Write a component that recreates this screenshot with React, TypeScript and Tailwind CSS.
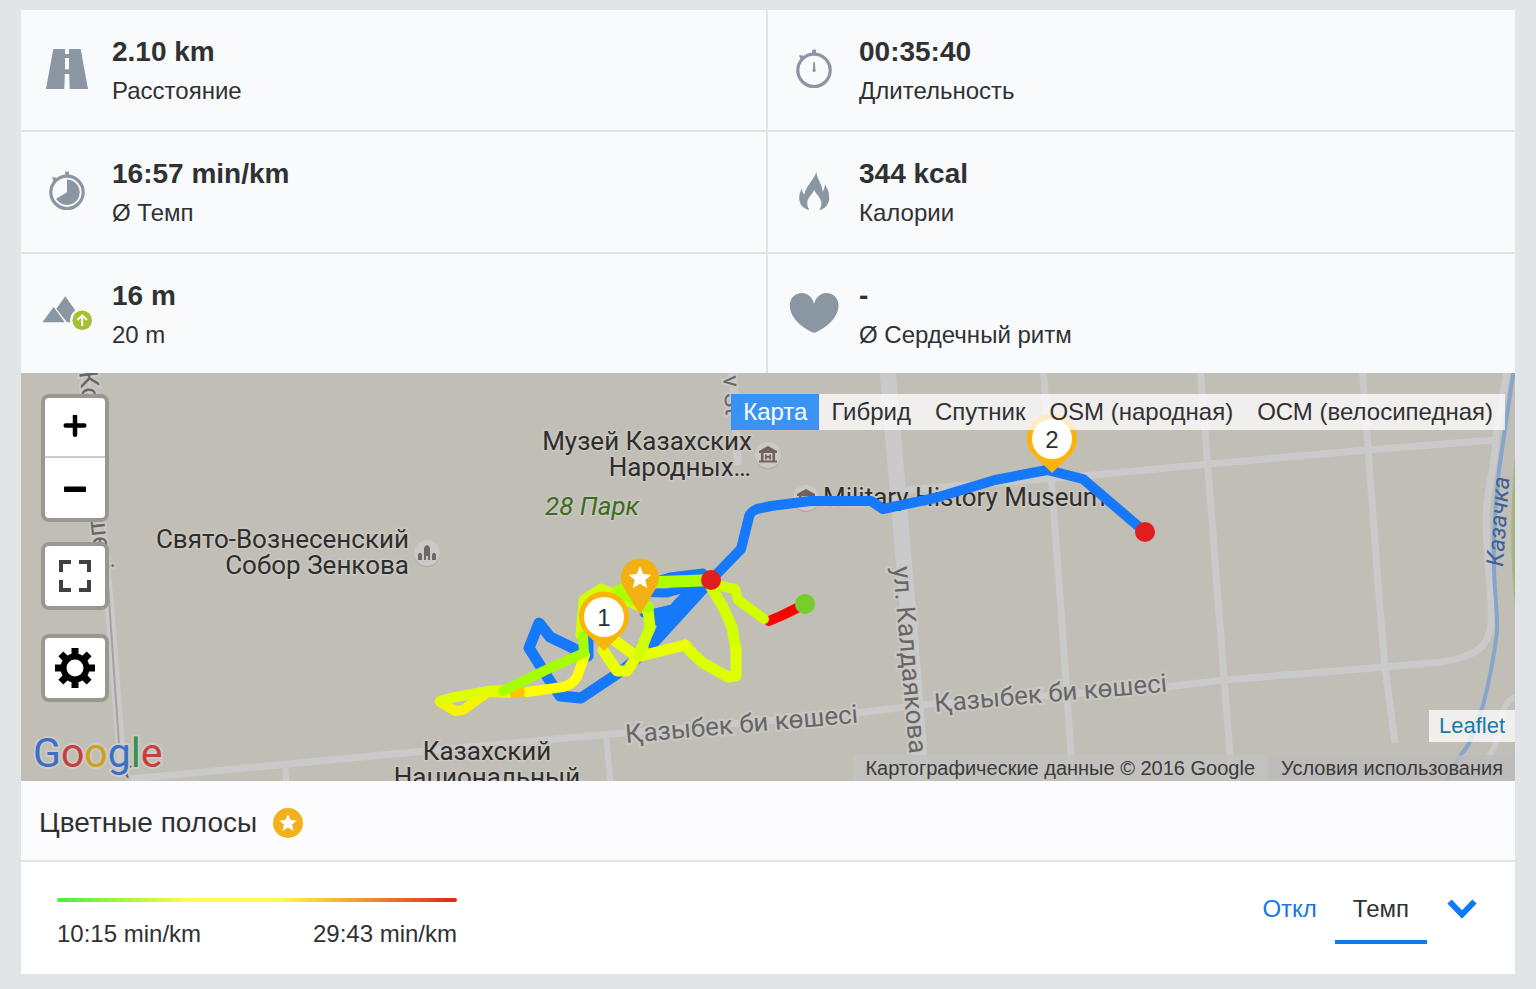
import type { ReactNode } from "react";

const SANS = "font-['Liberation_Sans',Arial,sans-serif]";

function RoadIcon() {
  return (
    <svg width="50" height="50" viewBox="0 0 50 50" aria-hidden="true">
      <path d="M11.3 4H38.7L46 44H4Z" fill="#8a97a3" />
      <path d="M23 4h4v5h-4ZM23 13h4v11.3h-4ZM22.8 29h4.4l.5 15h-5.4Z" fill="#f9fafc" />
    </svg>
  );
}

function WatchIcon({ pace }: { pace?: boolean }) {
  return (
    <svg width="50" height="50" viewBox="0 0 50 50" fill="none" aria-hidden="true">
      <circle cx="25" cy="25.3" r="16.2" stroke="#8a97a3" strokeWidth="3.2" />
      <path d="M23.2 4.6h3.8v4h-3.8Z" fill="#8a97a3" />
      <path d="M11.4 13.6l2.8-2.8" stroke="#8a97a3" strokeWidth="2.4" />
      <path d="M10.6 10.4l3 3" stroke="#8a97a3" strokeWidth="1.8" />
      {pace ? (
        <path d="M25 25.3V12.6A12.7 12.7 0 1 1 14 31.65Z" fill="#8a97a3" />
      ) : (
        <path d="M24.4 17h1.5l.5 7.6a1.6 1.6 0 1 1-2.6 0Z" fill="#8a97a3" />
      )}
    </svg>
  );
}

function FlameIcon() {
  return (
    <svg width="50" height="50" viewBox="0 0 50 50" aria-hidden="true">
      <path
        fill="#8a97a3"
        d="M27.3 5C28 12 33.5 18 33.7 24.7C35.2 22.5 35.8 20 35.8 17.3C38.5 21 40.2 25.5 40.2 30.5C40.2 37 36.5 42 30.3 43C32 40.5 32.7 38 32.3 35C31.5 30 27 27.5 25.2 22.7C23.5 27.5 19 30 18.3 35C18 38 18.8 40.5 20.4 43C14 42 10.2 37 10.2 31C10.2 27.5 11.2 24 13 21.3C12.8 24 13.6 26 15.4 27.6C17 18 25 13.5 27.3 5Z"
      />
    </svg>
  );
}

function MountainIcon() {
  return (
    <svg width="50" height="50" viewBox="0 0 50 50" aria-hidden="true">
      <path d="M.3 33.3L11.7 18L22.7 33.3Z" fill="#8a97a3" />
      <path d="M14.3 19.7L23.3 7.3L36.5 26V33.3H25Z" fill="#8a97a3" />
      <circle cx="40.2" cy="31.3" r="12" fill="#f9fafc" />
      <circle cx="40.2" cy="31.3" r="9.8" fill="#a5c035" />
      <path d="M40.2 37V26.6M35.5 31l4.7-4.7L44.9 31" fill="none" stroke="#fff" strokeWidth="2" />
    </svg>
  );
}

function HeartIcon() {
  return (
    <svg width="50" height="50" viewBox="0 0 50 50" aria-hidden="true">
      <path
        fill="#8a97a3"
        d="M25.1 15C23.5 8 18.5 4 12.8 4C6 4 .8 9 .8 16.5C.8 28 12 38.5 25.1 44C38.3 38.5 49.5 28 49.5 16.5C49.5 9 44.3 4 37.5 4C31.7 4 26.7 8 25.1 15Z"
      />
    </svg>
  );
}

const stats: { value: string; label: string; icon: ReactNode }[] = [
  { value: "2.10 km", label: "Расстояние", icon: <RoadIcon /> },
  { value: "00:35:40", label: "Длительность", icon: <WatchIcon /> },
  { value: "16:57 min/km", label: "Ø Темп", icon: <WatchIcon pace /> },
  { value: "344 kcal", label: "Калории", icon: <FlameIcon /> },
  { value: "16 m", label: "20 m", icon: <MountainIcon /> },
  { value: "-", label: "Ø Сердечный ритм", icon: <HeartIcon /> },
];

const STAR = "M0-10L2.9-3.5L9.9-2.9L4.6 1.8L6.2 8.7L0 5L-6.2 8.7L-4.6 1.8L-9.9-2.9L-2.9-3.5Z";

function NumberPin({ x, y, n }: { x: number; y: number; n: string }) {
  return (
    <g transform={`translate(${x} ${y})`}>
      <path d="M0 34L-20 14.5A25 25 0 1 1 20 14.5Z" fill="#fbb40c" />
      <circle r="20" fill="#fff" />
      <text y="9" textAnchor="middle" fontSize="24" fill="#2e3033" className="font-['Liberation_Sans',sans-serif]">
        {n}
      </text>
    </g>
  );
}

function MuseumPoi({ x, y }: { x: number; y: number }) {
  return (
    <g transform={`translate(${x} ${y})`}>
      <circle cy="1" r="13" fill="#a9a7a3" />
      <circle r="13" fill="#cbc9c7" />
      <path d="M-9-4L0-9L9-4V-2H-9Z" fill="#735f5b" />
      <path d="M-7-2h2.5v8H-7ZM4.5-2H7v8H4.5ZM-9 5.5H9V7.5H-9ZM-3-.5h1.8V1h2.4V-.5H3v5H1.2V2.7h-2.4V4.5H-3Z" fill="#735f5b" />
    </g>
  );
}

function MapCanvas() {
  return (
    <svg
      className="block h-full w-full font-[Roboto,sans-serif]"
      viewBox="21 373 1494 408"
      preserveAspectRatio="xMidYMid slice"
      fill="none"
    >
      <rect x="21" y="373" width="1494" height="408" fill="#c1beb6" />

      <g stroke="#cbcacb" strokeWidth="7">
        <path d="M887 365L908 610L922 790" strokeWidth="16" />
        <path d="M1043 365L1061 610L1073 781" />
        <path d="M1200 365L1218 600L1232 781" />
        <path d="M1362 365L1380 610L1385 667L1395 743" />
        <path d="M732 365L738 465" strokeWidth="8" />
        <path d="M905 490L1094 475L1208 464L1368 450L1494 440" />
        <path d="M130 779L425 751L600 735L857 713L930 704L1165 687L1225 680L1385 667L1440 662C1475 657 1491 648 1491 618C1492 590 1486 560 1486 520C1486 490 1496 465 1496 435L1508 365" />
        <path d="M606 735L611 790" strokeWidth="6" />
        <path d="M285 768L287 790" strokeWidth="6" />
        <path d="M84 365L109 600L122 765" strokeWidth="9" />
        <path d="M1517 697C1505 699 1502 712 1500 728C1497 745 1492 752 1486 760" strokeWidth="6" />
      </g>
      <path d="M84 365L107 570L119 745" stroke="#a3a29f" strokeWidth="2" />
      <path d="M1514 368L1499 470C1495 510 1493 540 1494 570C1495 600 1498 615 1497 632C1491 680 1478 735 1463 752C1455 763 1450 772 1446 785" stroke="#86a5cc" strokeWidth="4" />
      <path d="M1515 455C1510 510 1510 560 1515 605Z" fill="#a3b483" />

      <g fontSize="26" fill="#676665" stroke="#c9c8c5" strokeWidth="4" style={{ paintOrder: "stroke" }}>
        <text transform="translate(626 743) rotate(-5)">Қазыбек би көшесі</text>
        <text transform="translate(935 712) rotate(-5)">Қазыбек би көшесі</text>
        <text transform="translate(893 567) rotate(85)">ул. Калдаякова</text>
        <text transform="translate(79 372) rotate(83)">Ко</text>
        <text transform="translate(90 516) rotate(84)">шесі</text>
        <text fontSize="24" transform="translate(723 376) rotate(86)">v St</text>
        <text fontSize="24" transform="translate(117 774) rotate(20)">к</text>
      </g>
      <text fontSize="24" fontStyle="italic" fill="#3d619a" transform="translate(1503 567) rotate(-86)">
        Казачка
      </text>

      <MuseumPoi x={768} y={455} />
      <MuseumPoi x={806} y={498} />
      <g transform="translate(427 553)">
        <circle cy="1" r="13" fill="#a9a7a3" />
        <circle r="13" fill="#cbc9c7" />
        <path d="M-9 7V1.5Q-7-2-5 1.5V7ZM-3 7V-5Q0-11 3-5V7H1V3H-1V7ZM5 7V1.5Q7-2 9 1.5V7Z" fill="#6b6965" />
      </g>

      <g fontSize="26" fill="#2f2e2c" stroke="#c9c7c2" strokeWidth="3" style={{ paintOrder: "stroke" }}>
        <text x="752" y="450" textAnchor="end">Музей Казахских</text>
        <text x="751" y="476" textAnchor="end">Народных…</text>
        <text x="409" y="548" textAnchor="end">Свято-Вознесенский</text>
        <text x="409" y="574" textAnchor="end">Собор Зенкова</text>
        <text x="487" y="760" textAnchor="middle">Казахский</text>
        <text x="487" y="786" textAnchor="middle">Национальный</text>
        <text x="823" y="506">Military History Museum</text>
        <text x="545" y="515" fill="#3f6b1e" fontStyle="italic">28 Парк</text>
      </g>

      <text x="33" y="767" fontSize="41" fontWeight="400" stroke="#cbc9c6" strokeWidth="4" style={{ paintOrder: "stroke" }}>
        <tspan fill="#3e6fc4">G</tspan>
        <tspan fill="#c8403a">o</tspan>
        <tspan fill="#cfa01c">o</tspan>
        <tspan fill="#3e6fc4">g</tspan>
        <tspan fill="#35924b">l</tspan>
        <tspan fill="#c8403a">e</tspan>
      </text>

      <g strokeWidth="11" strokeLinecap="round" strokeLinejoin="round">
        <path
          stroke="#1678fa"
          strokeWidth="10"
          d="M1145 532L1083 479L1047 470L995 480L935 498L883 509L871 501H810L771 506L757 509Q750 512 749 517L741 549L711 580"
        />
        <path
          stroke="#1678fa"
          d="M711 580L647 650L623 670L581 698L560 696L548 678L529 648L539 623L550 637L573 648L588 656V640"
        />
        <path stroke="#1678fa" strokeWidth="9" d="M703 573L670 577L620 592L667 593L700 584" />
        <path d="M676 602L688 590L700 590L650 648L660 625L642 614L672 607Z" fill="#1678fa" stroke="#1678fa" strokeWidth="5" />
        <path stroke="#ff0000" strokeWidth="10" d="M805 604L783 615L769 621" />
        <path stroke="#d2ff00" strokeWidth="10" d="M764 619L738 600L735 589L711 584" />
        <path stroke="#d2ff00" d="M711 587L723 607L732 627L736 650" />
        <path stroke="#ddff00" d="M736 650L736 676L728 677L703 663L693 654L685 645" />
        <path stroke="#e9ff00" d="M685 645L637 657L610 637M603 650L617 671H627L643 647" />
        <path stroke="#d2ff00" d="M639 655L650 627L648 610L620 597L601 589L584 600L581 635" />
        <path stroke="#adff00" d="M648 607L618 591M711 580L690 581L658 582L620 590" strokeWidth="12" />
        <path stroke="#ffff00" strokeWidth="10" d="M585 655L577 677Q572 685 563 687L527 692" />
        <path stroke="#f5f500" strokeWidth="10" d="M508 693L488 692L463 710L455 711L440 702" />
        <path stroke="#dfff00" strokeWidth="10" d="M440 701L450 698L488 691L505 690" />
        <path stroke="#ffc400" strokeWidth="10" d="M515 693L520 692" />
        <path stroke="#a5ff00" strokeWidth="10" d="M583 636L584 653L550 668L503 691" />
      </g>
      <circle cx="711" cy="580" r="10" fill="#e21d1d" />
      <circle cx="1145" cy="532" r="10" fill="#e21d1d" />
      <circle cx="805" cy="604" r="10" fill="#77cd2b" />
      <path d="M640 615L623.5 587A19 19 0 1 1 656.5 587Z" fill="#f3b012" />
      <path d={STAR} fill="#fff" transform="translate(640 578) scale(1.15)" />
      <NumberPin x={604} y={617} n="1" />
      <NumberPin x={1052} y={439} n="2" />
    </svg>
  );
}

const layers = ["Карта", "Гибрид", "Спутник", "OSM (народная)", "ОСМ (велосипедная)"];
const gearTeeth = [0, 45, 90, 135, 180, 225, 270, 315];

function MapControls() {
  return (
    <div className="absolute top-[21px] left-5 flex flex-col">
      <div className="flex w-[68px] flex-col overflow-hidden rounded-lg border-4 border-[#999890] bg-white">
        <button type="button" aria-label="+" className="flex h-[60px] items-center justify-center border-b-2 border-[#cccccc]">
          <svg width="24" height="24" viewBox="0 0 24 24" stroke="#000" strokeWidth="4.5" strokeLinecap="round">
            <path d="M12 1.2V19.8M2.700 10.5H21.300" />
          </svg>
        </button>
        <button type="button" aria-label="−" className="flex h-[60px] items-center justify-center">
          <svg width="24" height="24" viewBox="0 0 24 24">
            <rect x="1" y="10.5" width="22" height="5.5" rx="1" />
          </svg>
        </button>
      </div>
      <button type="button" aria-label="Fullscreen" className="mt-5 flex size-[68px] items-center justify-center rounded-lg border-4 border-[#999890] bg-white">
        <svg width="32" height="32" viewBox="0 0 32 32" fill="none" stroke="#404040" strokeWidth="4">
          <path d="M2 12V2H12M20 2H30V12M30 20V30H20M12 30H2V20" />
        </svg>
      </button>
      <button type="button" aria-label="Settings" className="mt-6 flex size-[68px] items-center justify-center rounded-lg border-4 border-[#999890] bg-white">
        <svg width="40" height="40" viewBox="-20 -20 40 40">
          {gearTeeth.map((angle) => (
            <path key={angle} transform={`rotate(${angle})`} d="M-3.5-20H3.5V-12H-3.5Z" />
          ))}
          <circle r="11.5" fill="none" stroke="#000" strokeWidth="6" />
        </svg>
      </button>
    </div>
  );
}

export default function App() {
  return (
    <div className={`bg-[#e1e5e8] px-[21px] pt-[10px] pb-[15px] text-2xl text-[#303133] ${SANS}`}>
      <main>
        <dl className="grid grid-cols-2">
          {stats.map((s) => (
            <div
              key={s.label}
              className="flex h-[122px] items-center border-b-2 border-[#e1e4e6] bg-[#f9fafc] odd:border-r-2 nth-last-[-n+2]:h-[119px] nth-last-[-n+2]:border-b-0"
            >
              <div className="flex w-[91px] shrink-0 justify-center">{s.icon}</div>
              <div className="flex flex-col-reverse pt-[2px]">
                <dt className="leading-[38px]">{s.label}</dt>
                <dd className="text-[28px] leading-10 font-bold">{s.value}</dd>
              </div>
            </div>
          ))}
        </dl>

        <section className="relative h-[408px] overflow-hidden">
          <MapCanvas />
          <MapControls />
          <div className="absolute top-[21px] right-[10px] flex bg-white/75">
            {layers.map((name, i) => (
              <button
                key={name}
                type="button"
                className={i === 0 ? "h-9 bg-[#1a82f5]/85 px-3 leading-9 text-white" : "h-9 px-3 leading-9"}
              >
                {name}
              </button>
            ))}
          </div>
          <a href="#leaflet" className="absolute right-0 bottom-[39px] bg-white/75 px-[10px] text-[22px] leading-8 text-[#167ba8]">
            Leaflet
          </a>
          <div className="absolute right-0 bottom-0 flex gap-[2px] text-xl leading-[26px] text-[#3a3a3a]">
            <span className="bg-[#c2c2c1]/80 px-3">Картографические данные © 2016 Google</span>
            <a href="#terms" className="bg-[#bcbcbb]/80 px-3">Условия использования</a>
          </div>
        </section>

        <h2 className="flex h-[81px] items-center gap-4 border-b-2 border-[#e1e4e6] bg-[#fcfcfe] px-[18px] pt-1 text-[28px]">
          Цветные полосы
          <svg width="30" height="30" viewBox="-15 -15 30 30" aria-hidden="true">
            <circle r="15" fill="#f3b21b" />
            <path d={STAR} fill="#fff" transform="scale(.88)" />
          </svg>
        </h2>

        <section className="flex h-28 items-start justify-between bg-white pr-[38px] pl-9">
          <div className="w-[400px] pt-9">
            <div className="h-1 rounded-full bg-[linear-gradient(90deg,#46f03e_0%,#fdfb45_32%,#fdfb45_56%,#e2231a_100%)]" />
            <div className="mt-4 flex justify-between leading-8">
              <span>10:15 min/km</span>
              <span>29:43 min/km</span>
            </div>
          </div>
          <div className="flex pt-3">
            <button type="button" className="h-[70px] border-b-4 border-transparent px-[18px] pt-1 text-[#1678e0]">
              Откл
            </button>
            <button type="button" className="h-[70px] border-b-4 border-[#0d7bea] px-[18px] pt-1">
              Темп
            </button>
            <button type="button" aria-label="Ещё" className="ml-5 flex h-[70px] items-center">
              <svg width="30" height="20" viewBox="0 0 30 20" fill="none" stroke="#0d7bf2" strokeWidth="6">
                <path d="M2.5 2.5L15 15.5L27.5 2.5" />
              </svg>
            </button>
          </div>
        </section>
      </main>
    </div>
  );
}
